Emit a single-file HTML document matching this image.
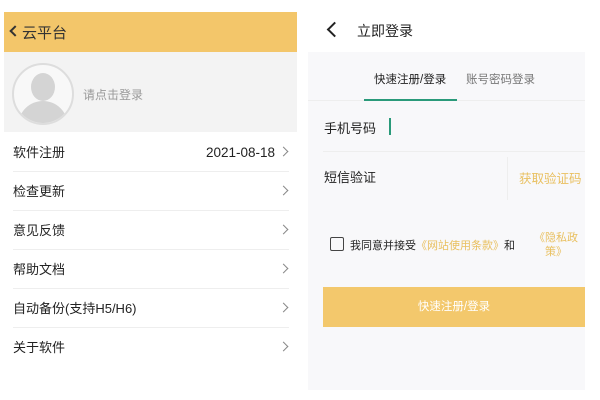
<!DOCTYPE html><html><head><meta charset="utf-8"><style>
*{margin:0;padding:0;box-sizing:border-box}
body{width:600px;height:400px;background:#fff;position:relative;overflow:hidden;font-family:"Liberation Sans","Noto Sans CJK SC",sans-serif;color:#222}
.a{position:absolute}
.row{position:absolute;left:13px;width:276px;height:39px;font-size:13px;line-height:39px;border-bottom:1px solid #eee}
.chev{position:absolute;right:2px;top:15px;width:7px;height:7px;border-right:1.3px solid #888;border-top:1.3px solid #888;transform:rotate(45deg)}
.y{color:#e9c060}
</style></head><body>
<div class="a" style="left:4px;top:12px;width:293px;height:40px;background:#f3c66a"></div>
<div class="a" style="left:11px;top:27px;width:8px;height:8px;border-left:2.2px solid #333;border-bottom:2.2px solid #333;transform:rotate(45deg)"></div>
<div class="a" style="left:22px;top:22px;font-size:15px;color:#333">云平台</div>
<div class="a" style="left:4px;top:52px;width:293px;height:80px;background:#f3f3f3"></div>
<div class="a" style="left:12px;top:63px;width:62px;height:62px;border-radius:50%;border:2px solid #ddd;background:#f8f8f8;overflow:hidden">
<div class="a" style="left:17px;top:8px;width:24px;height:28px;border-radius:50%;background:#d4d4d4"></div>
<div class="a" style="left:4px;top:36px;width:50px;height:30px;border-radius:25px 25px 0 0;background:#d4d4d4"></div></div>
<div class="a" style="left:83px;top:86px;font-size:12px;color:#999">请点击登录</div>
<div class="row" style="top:133px">软件注册<span style="position:absolute;right:14px;font-size:13.5px">2021-08-18</span><i class="chev"></i></div>
<div class="row" style="top:172px">检查更新<i class="chev"></i></div>
<div class="row" style="top:211px">意见反馈<i class="chev"></i></div>
<div class="row" style="top:250px">帮助文档<i class="chev"></i></div>
<div class="row" style="top:289px">自动备份(支持H5/H6)<i class="chev"></i></div>
<div class="row" style="top:328px;border:none">关于软件<i class="chev"></i></div>

<div class="a" style="left:308px;top:52px;width:277px;height:338px;background:#f8f8fa"></div>
<div class="a" style="left:329px;top:24px;width:11px;height:11px;border-left:2px solid #222;border-bottom:2px solid #222;transform:rotate(45deg)"></div>
<div class="a" style="left:357px;top:21px;font-size:14px">立即登录</div>
<div class="a" style="left:374px;top:71px;font-size:11.5px;color:#222">快速注册/登录</div>
<div class="a" style="left:466px;top:71px;font-size:11.5px;color:#777">账号密码登录</div>
<div class="a" style="left:308px;top:100px;width:277px;height:1px;background:#eee"></div>
<div class="a" style="left:364px;top:99px;width:93px;height:2px;background:#2a9a7a"></div>
<div class="a" style="left:324px;top:118px;font-size:13px">手机号码</div>
<div class="a" style="left:389px;top:118px;width:2px;height:17px;background:#2a9a7a"></div>
<div class="a" style="left:323px;top:151px;width:262px;height:1px;background:#eee"></div>
<div class="a" style="left:324px;top:167px;font-size:13px">短信验证</div>
<div class="a" style="left:507px;top:157px;width:1px;height:43px;background:#eee"></div>
<div class="a y" style="left:519px;top:168px;font-size:12.5px">获取验证码</div>
<div class="a" style="left:330px;top:237px;width:14px;height:14px;border:1.5px solid #444;border-radius:2px"></div>
<div class="a" style="left:350px;top:237px;font-size:11px">我同意并接受<span class="y">《网站使用条款》</span>和</div>
<div class="a y" style="left:534px;top:231px;font-size:11px;line-height:14px;text-align:center;width:44px">《隐私政<br>策》</div>
<div class="a" style="left:323px;top:287px;width:262px;height:40px;background:#f3c86c;color:#fff;font-size:11.5px;text-align:center;line-height:40px">快速注册/登录</div>
</body></html>
